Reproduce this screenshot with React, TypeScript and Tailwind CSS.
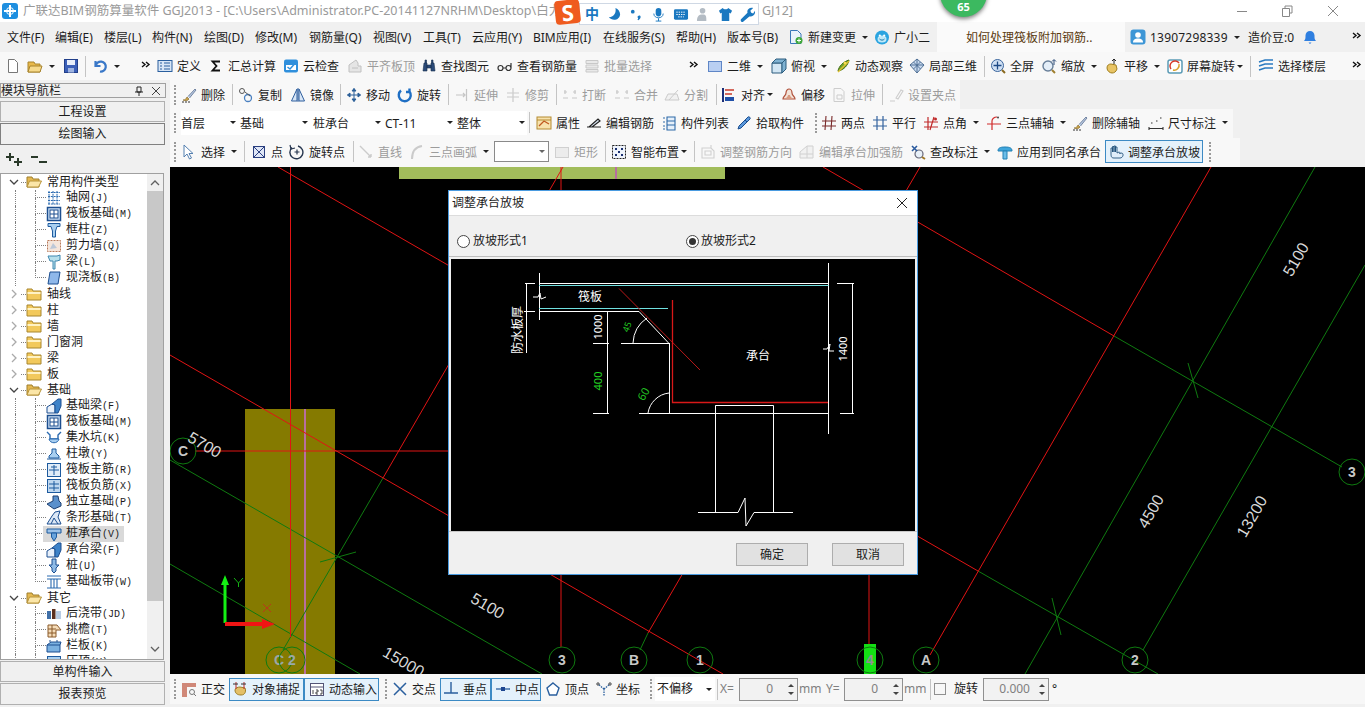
import type { ReactNode } from "react";

const ICONS: Record<string, ReactNode> = {
  chev: <path d="M5 4l3 2.5L5 9M9 4l3 2.5L9 9" stroke="#111" strokeWidth="1.4" />,
  new: <path d="M3.5 1.5h6l3 3v10h-9z" fill="#fff" stroke="#777" />,
  open: <><path d="M1 4h6l1 2h5v8H1z" fill="#e8b84a" stroke="#a8842c" /><path d="M3 8h12l-2 6H1z" fill="#f6d98a" stroke="#a8842c" /></>,
  save: <><rect x="1.5" y="1.5" width="13" height="13" fill="#3b5fb8" stroke="#223f8a" /><rect x="4" y="2" width="8" height="5" fill="#e8eefa" /><rect x="5" y="10" width="6" height="4.5" fill="#9fb4e0" /></>,
  undo: <path d="M3.5 3v5h5M3.8 8A5 5 0 1 1 8 13.500" stroke="#3a78c8" strokeWidth="2.2" />,
  define: <><rect x="1" y="2.500" width="14" height="11" fill="#d8e6f6" stroke="#2a5f9e" /><path d="M7 5h6M7 8h6M7 11h6M3 5h2M3 8h2M3 11h2" stroke="#2a5f9e" /></>,
  sigma: <path d="M12 3.500H4.500l4 4.500-4 4.500H12" stroke="#111" strokeWidth="1.8" />,
  cloud: <><rect x="1" y="1.500" width="14" height="13" rx="2" fill="#2f8fdc" /><path d="M3 7h10v5H3z" fill="#fff" /><path d="M4.500 9l2.500 2 4.500-5" stroke="#2f8fdc" strokeWidth="1.500" /></>,
  flush: <path d="M2 14V7l7-5 2 3v3h3v6zM5 10h6" fill="#ddd" stroke="#aaa" />,
  bino: <path d="M2 13l1-8h3v8zM10 13V5h3l1 8zM6 7h4v3H6zM4 5V2h1.500v3M10.500 5V2H12v3" fill="#2b4a78" stroke="#17304f" strokeWidth=".6" />,
  glasses: <path d="M1 10a2.500 2.500 0 1 0 5 0 2.500 2.500 0 0 0-5 0zM9 10a2.500 2.500 0 1 0 5 0 2.500 2.500 0 0 0-5 0M6 10h3M14 10V5" stroke="#333" strokeWidth="1.200" />,
  batch: <path d="M2 2.500h12v3H2zM2 7h12v3H2zM2 11.500h12V14H2z" fill="#e4e4e4" stroke="#b5b5b5" />,
  view2d: <rect x="1.500" y="3.500" width="13" height="10" fill="#b9cff2" stroke="#5f86c6" />,
  cube: <><path d="M1 5h10v10H1z" fill="#d2e6f4" stroke="#2c5d7e" /><path d="M1 5l4-4h10l-4 4zM11 5l4-4v10l-4 4z" fill="#7fb2d2" stroke="#2c5d7e" /></>,
  orbit: <><path d="M3 13c1-5 5-9 11-11-1 5-5 10-11 11z" fill="#6fa52e" stroke="#3c6a12" /><path d="M3 14L14 3" stroke="#e0c030" strokeWidth="1.500" /><circle cx="10" cy="5" r="1.500" fill="#f5dc50" /></>,
  local3d: <path d="M8 1l7 6-7 8-7-8zM1 7h14M8 1v14M4.500 4l7 7M11.500 4l-7 7" fill="#c7d9ee" stroke="#46688f" strokeWidth=".9" />,
  full: <><circle cx="7.500" cy="7.500" r="6" fill="#cfe0f4" stroke="#39649c" /><path d="M7.500 3.500v8M3.500 7.500h8" stroke="#1e4a86" strokeWidth="1.300" /><path d="M12 12l3 3" stroke="#8a6a20" strokeWidth="2" /></>,
  zoom: <><circle cx="7" cy="8" r="5" fill="#e4eef8" stroke="#687f99" strokeWidth="1.400" /><path d="M11 12l3 3" stroke="#a08030" strokeWidth="2" /><path d="M13 2v5M11 3.500l2-2 2 2" stroke="#2a4a78" /></>,
  pan: <><path d="M3 10c0-3 2-4 4-4l5 1 1 4c-1 3-3 4-5 4s-5-2-5-5z" fill="#e8c465" stroke="#a07f20" /><path d="M10 1v5M8 3l2-2 2 2" stroke="#222" /></>,
  screen: <><rect x="1" y="2" width="14" height="13" rx="2" fill="#fff" stroke="#5a9ab5" strokeWidth="1.500" /><path d="M4 11a5 5 0 0 1 8-6" stroke="#d83a2a" strokeWidth="1.500" /><path d="M12 6a5 5 0 0 1-6 6" stroke="#d8a02a" strokeWidth="1.500" /></>,
  floors: <path d="M1 4l6-2h8M1 8l6-2h8M1 12l6-2h8" stroke="#2a7ac0" strokeWidth="1.600" />,
  docnew: <><path d="M2.500 1.500h7l3.500 3.500v9.500H2.500z" fill="#eaf3fb" stroke="#3a78b8" /><circle cx="11" cy="11.500" r="3.500" fill="#3fa83a" /><path d="M9 11.500h4M11 9.500v4" stroke="#fff" /></>,
  xiaoer: <><circle cx="8" cy="8.500" r="7" fill="#2aa4e0" /><ellipse cx="8" cy="10" rx="4.500" ry="3.500" fill="#bfe8f8" /><circle cx="5.800" cy="6.500" r="1.100" fill="#fff" /><circle cx="10.200" cy="6.500" r="1.100" fill="#fff" /><path d="M5.500 10c1.500 1.500 3.500 1.500 5 0" stroke="#1878a8" /></>,
  user: <><rect x="0.500" y="0.500" width="15" height="15" rx="3" fill="#3d96d6" /><circle cx="8" cy="6" r="2.800" fill="#fff" /><path d="M3 13.500c0-3 2-4 5-4s5 1 5 4z" fill="#fff" /></>,
  bell: <path d="M2 12c1.500-1.500 1.500-3 1.500-5.500S5.500 2 8 2s4.500 2 4.500 4.500S12.500 10.500 14 12zM6.500 13.500h3L8 15z" fill="#2f7fe0" />,
  brush: <><path d="M2 13c2 0 3-1 4-3l2 2c-1 2-4 2-6 1z" fill="#c9a24a" stroke="#7a5f20" strokeWidth=".6" /><path d="M7 9.500L14 2l1 1-6.500 8" fill="#b9c9e0" stroke="#5a6f90" strokeWidth=".8" /><path d="M1 15h9" stroke="#333" strokeDasharray="2 1" /></>,
  copy: <><circle cx="4" cy="4" r="2.500" stroke="#555" /><circle cx="10" cy="11" r="3.500" stroke="#4a80c0" strokeWidth="1.300" /><path d="M7 5l5 4" stroke="#555" /></>,
  mirror: <path d="M7 2L1.500 14H7zM9 2l5.500 12H9zM8 1v14" stroke="#2f5f9e" fill="#d8e6f6" />,
  move: <path d="M8 1.500v13M1.500 8h13M8 1.500L6 4h4zM8 14.500L6 12h4zM1.500 8L4 6v4zM14.500 8L12 6v4z" stroke="#2b5f98" fill="#2b5f98" />,
  rotate: <path d="M12.500 4.500A6 6 0 1 1 4 3.500M12.500 1.500v3.500H9" stroke="#1f6fc4" strokeWidth="2.400" />,
  extend: <path d="M2 8h8M12.500 2v12M9 6l2 2-2 2" stroke="#b0b0b0" strokeWidth="1.200" />,
  trim: <path d="M2 6h12M2 10h12M8 1v14" stroke="#b8b8b8" strokeWidth="1.200" />,
  broke: <path d="M1 11h5M10 11h5M2 5h3M11 5h3M3 3v4M13 3v4" stroke="#b5b5b5" strokeWidth="1.200" />,
  split: <path d="M1 13h14L13 7H4zM5 13l9-10" stroke="#b8b8b8" fill="#efefef" />,
  align: <><path d="M2 1v14" stroke="#1c2f78" strokeWidth="2" /><path d="M4 3h9M4 7h7" stroke="#c83a2a" strokeWidth="1.600" /><rect x="4" y="10" width="9" height="4" fill="#2050a8" /></>,
  offset: <><path d="M2 12c0-3 3-3 3-6s2-4 3-4 3 1 3 4 3 3 3 6z" fill="#f3e3d8" stroke="#b0503a" strokeWidth="1.200" /><path d="M5 12c0-2 2-2 2-4h2c0 2 2 2 2 4z" fill="#d89a80" /></>,
  stretch: <path d="M3 1.500h7l3 3v10H3zM6 8h5v4H6z" stroke="#bbb" />,
  grips: <path d="M2 14h5M8 11l5-8 2 1-5 8z" stroke="#bbb" strokeWidth="1.100" />,
  props: <><rect x="1" y="2" width="14" height="12" fill="#f7e2ad" stroke="#b48a30" /><path d="M3 11l5-5 5 3" stroke="#c05a20" strokeWidth="1.300" /><path d="M1 5h14" stroke="#b48a30" /></>,
  editbar: <path d="M1 12h14M3 12l9-8 2 2-8 6" stroke="#222" strokeWidth="1.200" fill="#d7e3f1" />,
  list: <path d="M2 3h2M2 7h2M2 11h2M2 14h2M6 2h8v13H6zM6 6h8M6 10h8" stroke="#2f6aa8" strokeWidth="1.100" fill="#e6f0fa" />,
  eyedrop: <path d="M2 14l1-3 6-6 2 2-6 6zM9 5l3-3c1-1 3 1 2 2l-3 3" fill="#5a98dc" stroke="#1c4f90" />,
  twopts: <path d="M1 6h14M1 11h14M5 1l-1 14M11 1l-1 14" stroke="#7a2a2a" strokeWidth="1.100" />,
  parallel: <path d="M1 5h14M1 11h14M5 1v14M11 1v14" stroke="#32629e" strokeWidth="1.200" />,
  ptangle: <><path d="M1 7h14M1 12h14M5 2v13M11 2L7 15" stroke="#c02a2a" strokeWidth="1.200" /><circle cx="12.500" cy="4" r="1.500" fill="#c02a2a" /></>,
  three: <><path d="M1 9h14M6 15V6c0-2 2-4 5-4" stroke="#d02a2a" strokeWidth="1.200" /><circle cx="12" cy="2.500" r="1" fill="#444" /></>,
  dimen: <path d="M1 12v3M15 12v3M1 13.500h14M3 8h1.500M8 6h1.500M12 3h1.500" stroke="#333" strokeWidth="1.100" />,
  cursor: <path d="M3 1v12l3-3 2.500 5 2-1-2.500-4.500h4z" fill="#fff" stroke="#5580b0" />,
  point: <><rect x="2.500" y="2.500" width="11" height="11" fill="#dfe6f6" stroke="#2a3f80" /><path d="M3 3l10 10M13 3L3 13" stroke="#2a3f80" /></>,
  rotpt: <><path d="M3 3.500A6.500 6.500 0 1 0 9 2" stroke="#27364f" strokeWidth="1.400" /><path d="M1 1l1 4 4-1M8 5.500v5M5.500 8h5" stroke="#27364f" strokeWidth="1.200" /></>,
  line: <path d="M2 2l11 11M13 13h-3M13 13v-3" stroke="#b8b8b8" strokeWidth="1.400" />,
  arc: <path d="M3 15C3 8 6 3 13 2" stroke="#b8b8b8" strokeWidth="2" />,
  rect: <rect x="1.500" y="3.500" width="13" height="10" fill="#e8e8e8" stroke="#c0c0c0" />,
  smart: <><rect x="1.500" y="1.500" width="13" height="13" fill="#eef3fb" stroke="#222" strokeDasharray="2 1" /><path d="M4 4h2v2H4zM10 4h2v2h-2zM7 7h2v2H7zM4 10h2v2H4zM10 10h2v2h-2z" fill="#1a2f70" /></>,
  adjdir: <path d="M2 4h9l3 3v7H2zM5 7h6v4H5zM11 1v3" stroke="#c0c0c0" strokeWidth="1.100" />,
  edith: <path d="M1 14V8l7-6h6v12zM8 2v12M1 10h13" stroke="#c0c0c0" fill="#efefef" />,
  check: <><circle cx="9" cy="10" r="4" fill="#e8f0f8" stroke="#667" strokeWidth="1.200" /><path d="M2 2l5 5M7 2L2 7" stroke="#2a5a9e" strokeWidth="1.600" /><path d="M12 13l3 2" stroke="#a07828" strokeWidth="2" /></>,
  apply: <><path d="M1 7c0-3 2-4 7-4s7 1 7 4z" fill="#3fa6dc" stroke="#2280b4" /><path d="M6 7h4v8H6z" fill="#6dbde8" stroke="#2280b4" /></>,
  hand: <path d="M3 9V4h1.500v4V2.500H6V8V2h1.500v6V3H9v6l2-1c1 0 1 1 .5 1.500L14 9c2 1 1 5-2 5H6C3 14 3 12 3 9z" fill="#e0eefa" stroke="#23527c" strokeWidth=".9" />,
  ortho: <><path d="M1 2h14v4H6v10H1z" fill="#d08878" /><circle cx="11" cy="11" r="2.500" stroke="#777" /><path d="M13 13l2 2" stroke="#777" /></>,
  snap: <><path d="M3 9c0-2 3-3 5-3l5 1c1 2 1 7-4 7-4 0-6-2-6-5z" fill="#e4c068" stroke="#a0802a" /><path d="M4 1v7M12 1v7" stroke="#c02a2a" /><path d="M1 3h5M9 3h5" stroke="#333" /></>,
  dyn: <><rect x="1.500" y="2.500" width="13" height="12" fill="#fff" stroke="#557" /><path d="M1.500 6h13" stroke="#557" /><path d="M4 9v4M7 9h2v2H7v2h2M11 9h2v4h-2" stroke="#333" strokeWidth=".9" /></>,
  cross: <path d="M2 2l12 12M14 2L2 14" stroke="#2a5f9e" strokeWidth="1.500" />,
  perp: <path d="M1 12h14M8 1v11" stroke="#2a5f9e" strokeWidth="1.400" />,
  mid: <><path d="M1 8h14" stroke="#2a5f9e" strokeWidth="1.300" /><rect x="6" y="6" width="4" height="4" fill="#1c4590" /></>,
  vertex: <path d="M8 2l6 5-2.500 7h-7L2 7z" fill="#fff" stroke="#2a5f9e" strokeWidth="1.400" />,
  coord: <><path d="M8 8V15M8 8L2 3M8 8l6-5" stroke="#2a5f9e" strokeDasharray="1.500 1" strokeWidth="1.300" /><circle cx="2" cy="3" r="1.200" stroke="#444" /><circle cx="14" cy="3" r="1.200" stroke="#444" /></>,
  folderO: <><path d="M1 3h5l1 2h6v8H1z" fill="#e4b850" stroke="#9f7f2c" /><path d="M3.500 7H15.500l-3 6H1z" fill="#fbe6a8" stroke="#b8943a" /></>,
  folderC: <><path d="M1 3h5l1 2h8v9H1z" fill="#f2c95c" stroke="#a8862e" /><path d="M1.500 6h13v2h-13z" fill="#fff2c4" /></>,
  grid: <path d="M2 2.500h12M2 6.500h12M2 10.500h12M2 14h12M3 1v14M7 1v14M11 1v14" stroke="#2a6ab0" strokeDasharray="2 .8" />,
  raft: <><rect x="1.500" y="1.500" width="13" height="13" fill="#cfe2f6" stroke="#1d4f90" strokeWidth="1.500" /><rect x="4" y="4" width="8" height="8" fill="#fff" stroke="#1d4f90" /><path d="M4 8h8M8 4v8" stroke="#1d4f90" /></>,
  col: <path d="M2 1.500h12v3h-3L9.500 9v6h-3V9L5 4.500H2z" fill="#a8cff0" stroke="#1d5a9e" />,
  wall: <><rect x="1.500" y="2.500" width="13" height="11" fill="#f5e6dc" stroke="#b87a5a" strokeDasharray="2 1" /><path d="M4 11l3-6 4 5z" fill="#bcc8d8" /></>,
  beam: <path d="M2 2h9l3-1v5l-3 1H9v8H7V7H4z" fill="#b8e0ec" stroke="#3f88b0" />,
  slab: <path d="M4 2h10l-2 12H2z" fill="#8fb8ea" stroke="#1d4f90" />,
  fbeam: <><path d="M1 15V9l5-3 3 1v8z" fill="#e8f0fa" stroke="#1d4f90" /><path d="M6 6l6-5h3v7l-3 7H9V7z" fill="#3d82c8" stroke="#1d4f90" /></>,
  sump: <><path d="M1 2l3 3v4h8V5l3-3" stroke="#2a6ab0" strokeWidth="1.400" /><path d="M3 9c1 5 9 5 10 0z" fill="#a6cdf0" stroke="#2a6ab0" /></>,
  pier: <path d="M6 3h4v4l3 3v2H3v-2l3-3zM1 13h14" fill="#a8cff0" stroke="#1d5a9e" />,
  rmain: <><rect x="1.500" y="1.500" width="13" height="13" fill="#e0ecf8" stroke="#1d5a9e" /><path d="M3 8h10M8 3v10M5 5h6" stroke="#1d5a9e" /></>,
  rneg: <><rect x="1.500" y="1.500" width="13" height="13" fill="#c0d8f0" stroke="#1d5a9e" /><path d="M3 6h10M3 10h10M8 3v10" stroke="#1d5a9e" /></>,
  iso: <path d="M1 10l6-3V2h5l1 5 2 2v3l-7 3z" fill="#5a90cc" stroke="#1d3f70" />,
  strip: <path d="M1 14l5-8 3-4 5-1-2 6 3 7H1zM5 14l3-6 4 6" fill="#dce8f6" stroke="#1d4f90" />,
  cap: <><path d="M1 3h14v4H1z" fill="#9cc2e8" stroke="#1d5a9e" /><path d="M5.500 7h5v4L8 15l-2.500-4z" fill="#6aa4dc" stroke="#1d5a9e" /></>,
  pile: <path d="M6 1h4v6h3l-3 3v3l-2 2-2-2v-3L3 7h3z" fill="#8fbbe6" stroke="#1d4f90" />,
  band: <path d="M1 2h14M1 14h14M1 5h14M5 5v9M11 5v9M8 5v9" stroke="#2a6ab0" strokeWidth="1.100" />,
  post: <><rect x="1" y="5" width="4" height="8" fill="#3f6fa8" /><rect x="6" y="3" width="3.500" height="10" fill="#5a3020" /><rect x="10" y="5" width="5" height="8" fill="#b8cce4" /></>,
  eave: <path d="M2 3h9l4 5h-5v7H2zM2 7h8M2 11h8M6 3v12" fill="#f5dcb8" stroke="#8a5a2a" />,
  para: <path d="M1 7h13v7H1zM1 7l4-3h10l-1 3M4 2v2M11 2v2" fill="#7ab0e0" stroke="#1d4f90" />,
  cap2: <rect x="1.500" y="2.500" width="13" height="11" fill="#a8cff0" stroke="#1d5a9e" />,
};

function Ic({ n, d }: { n: string; d?: boolean }) {
  return (
    <svg viewBox="0 0 16 16" width="16" height="16" fill="none" className={d ? "shrink-0 opacity-70" : "shrink-0"}>
      {ICONS[n]}
    </svg>
  );
}

function Caret({ tight }: { tight?: boolean }) {
  return (
    <span
      className={`border-x-[3px] border-t-[3px] border-x-transparent border-t-[#222] ${tight ? "-ml-[2px]" : "ml-[2px]"}`}
    />
  );
}

function Grip({ cls = "w-[11px] pl-[4px]" }: { cls?: string }) {
  return (
    <div className={`${cls} flex h-full shrink-0 items-center`}>
      <div className="h-[20px] border-l-2 border-dotted border-[#9a9a9a]" />
    </div>
  );
}

function Sep({ w, h = "h-[21px]" }: { w: string; h?: string }) {
  return (
    <div className={`${w} flex h-full shrink-0 items-center pl-[2px]`}>
      <div className={`${h} w-px bg-[#c4c4c4]`} />
    </div>
  );
}

type Item = { w: string; ic?: string; t?: string; c?: boolean; d?: boolean; tight?: boolean; sep?: boolean };

function Items({ items }: { items: Item[] }) {
  return (
    <>
      {items.map((it, i) =>
        it.sep ? (
          <Sep key={i} w={it.w} />
        ) : (
          <div key={i} className={`${it.w} flex h-full shrink-0 items-center gap-[4px] whitespace-nowrap ${it.d ? "text-[#9c9c9c]" : ""}`}>
            {it.ic && <Ic n={it.ic} d={it.d} />}
            {it.t && <span className="pt-[2px]">{it.t}</span>}
            {it.c && <Caret tight={it.tight} />}
          </div>
        ),
      )}
    </>
  );
}

const menu = [
  ["文件(F)", "w-[48px]"],
  ["编辑(E)", "w-[49px]"],
  ["楼层(L)", "w-[48px]"],
  ["构件(N)", "w-[52px]"],
  ["绘图(D)", "w-[51px]"],
  ["修改(M)", "w-[54px]"],
  ["钢筋量(Q)", "w-[64px]"],
  ["视图(V)", "w-[50px]"],
  ["工具(T)", "w-[49px]"],
  ["云应用(Y)", "w-[61px]"],
  ["BIM应用(I)", "w-[70px]"],
  ["在线服务(S)", "w-[73px]"],
  ["帮助(H)", "w-[51px]"],
  ["版本号(B)", "w-[61px]"],
];

const row1: Item[] = [
  { w: "w-[22px]", ic: "new" },
  { w: "w-[36px]", ic: "open", c: true },
  { w: "w-[20px]", ic: "save" },
  { w: "w-[9px]", sep: true },
  { w: "w-[45px]", ic: "undo", c: true },
  { w: "w-[20px]", ic: "chev" },
  { w: "w-[51px]", ic: "define", t: "定义" },
  { w: "w-[75px]", ic: "sigma", t: "汇总计算" },
  { w: "w-[64px]", ic: "cloud", t: "云检查" },
  { w: "w-[74px]", ic: "flush", t: "平齐板顶", d: true },
  { w: "w-[76px]", ic: "bino", t: "查找图元" },
  { w: "w-[87px]", ic: "glasses", t: "查看钢筋量" },
  { w: "w-[101px]", ic: "batch", t: "批量选择", d: true },
  { w: "w-[22px]", ic: "chev" },
  { w: "w-[64px]", ic: "view2d", t: "二维", c: true },
  { w: "w-[64px]", ic: "cube", t: "俯视", c: true },
  { w: "w-[74px]", ic: "orbit", t: "动态观察" },
  { w: "w-[73px]", ic: "local3d", t: "局部三维" },
  { w: "w-[8px]", sep: true },
  { w: "w-[51px]", ic: "full", t: "全屏" },
  { w: "w-[63px]", ic: "zoom", t: "缩放", c: true },
  { w: "w-[63px]", ic: "pan", t: "平移", c: true },
  { w: "w-[81px]", ic: "screen", t: "屏幕旋转", c: true, tight: true },
  { w: "w-[10px]", sep: true },
  { w: "w-[89px]", ic: "floors", t: "选择楼层" },
];

const row2: Item[] = [
  { w: "w-[49px]", ic: "brush", t: "删除" },
  { w: "w-[8px]", sep: true },
  { w: "w-[52px]", ic: "copy", t: "复制" },
  { w: "w-[48px]", ic: "mirror", t: "镜像" },
  { w: "w-[8px]", sep: true },
  { w: "w-[51px]", ic: "move", t: "移动" },
  { w: "w-[49px]", ic: "rotate", t: "旋转" },
  { w: "w-[8px]", sep: true },
  { w: "w-[51px]", ic: "extend", t: "延伸", d: true },
  { w: "w-[49px]", ic: "trim", t: "修剪", d: true },
  { w: "w-[8px]", sep: true },
  { w: "w-[52px]", ic: "broke", t: "打断", d: true },
  { w: "w-[50px]", ic: "broke", t: "合并", d: true },
  { w: "w-[50px]", ic: "split", t: "分割", d: true },
  { w: "w-[7px]", sep: true },
  { w: "w-[60px]", ic: "align", t: "对齐", c: true, tight: true },
  { w: "w-[50px]", ic: "offset", t: "偏移" },
  { w: "w-[49px]", ic: "stretch", t: "拉伸", d: true },
  { w: "w-[8px]", sep: true },
  { w: "w-[72px]", ic: "grips", t: "设置夹点", d: true },
];

const selects = [
  ["首层", "w-[59px]", "w-[49px]"],
  ["基础", "w-[73px]", "w-[62px]"],
  ["桩承台", "w-[72px]", "w-[62px]"],
  ["CT-11", "w-[72px]", "w-[62px]"],
  ["整体", "w-[70px]", "w-[62px]"],
];

const row3a: Item[] = [
  { w: "w-[9px]", sep: true },
  { w: "w-[50px]", ic: "props", t: "属性" },
  { w: "w-[75px]", ic: "editbar", t: "编辑钢筋" },
  { w: "w-[75px]", ic: "list", t: "构件列表" },
  { w: "w-[76px]", ic: "eyedrop", t: "拾取构件" },
];

const row3b: Item[] = [
  { w: "w-[51px]", ic: "twopts", t: "两点" },
  { w: "w-[51px]", ic: "parallel", t: "平行" },
  { w: "w-[63px]", ic: "ptangle", t: "点角", c: true },
  { w: "w-[86px]", ic: "three", t: "三点辅轴", c: true },
  { w: "w-[76px]", ic: "brush", t: "删除辅轴" },
  { w: "w-[85px]", ic: "dimen", t: "尺寸标注", c: true },
];

const row4a: Item[] = [
  { w: "w-[61px]", ic: "cursor", t: "选择", c: true },
  { w: "w-[9px]", sep: true },
  { w: "w-[38px]", ic: "point", t: "点" },
  { w: "w-[62px]", ic: "rotpt", t: "旋转点" },
  { w: "w-[7px]", sep: true },
  { w: "w-[51px]", ic: "line", t: "直线", d: true },
  { w: "w-[85px]", ic: "arc", t: "三点画弧", d: true, c: true },
];

const row4b: Item[] = [
  { w: "w-[49px]", ic: "rect", t: "矩形", d: true },
  { w: "w-[8px]", sep: true },
  { w: "w-[81px]", ic: "smart", t: "智能布置", c: true, tight: true },
  { w: "w-[8px]", sep: true },
  { w: "w-[99px]", ic: "adjdir", t: "调整钢筋方向", d: true },
  { w: "w-[111px]", ic: "edith", t: "编辑承台加强筋", d: true },
  { w: "w-[87px]", ic: "check", t: "查改标注", c: true },
  { w: "w-[108px]", ic: "apply", t: "应用到同名承台" },
];

type Node = { t: string; k?: string; ic: string };

const tree: { t: string; open?: boolean; kids?: Node[] }[] = [
  {
    t: "常用构件类型",
    open: true,
    kids: [
      { t: "轴网", k: "(J)", ic: "grid" },
      { t: "筏板基础", k: "(M)", ic: "raft" },
      { t: "框柱", k: "(Z)", ic: "col" },
      { t: "剪力墙", k: "(Q)", ic: "wall" },
      { t: "梁", k: "(L)", ic: "beam" },
      { t: "现浇板", k: "(B)", ic: "slab" },
    ],
  },
  { t: "轴线" },
  { t: "柱" },
  { t: "墙" },
  { t: "门窗洞" },
  { t: "梁" },
  { t: "板" },
  {
    t: "基础",
    open: true,
    kids: [
      { t: "基础梁", k: "(F)", ic: "fbeam" },
      { t: "筏板基础", k: "(M)", ic: "raft" },
      { t: "集水坑", k: "(K)", ic: "sump" },
      { t: "柱墩", k: "(Y)", ic: "pier" },
      { t: "筏板主筋", k: "(R)", ic: "rmain" },
      { t: "筏板负筋", k: "(X)", ic: "rneg" },
      { t: "独立基础", k: "(P)", ic: "iso" },
      { t: "条形基础", k: "(T)", ic: "strip" },
      { t: "桩承台", k: "(V)", ic: "cap" },
      { t: "承台梁", k: "(F)", ic: "fbeam" },
      { t: "桩", k: "(U)", ic: "pile" },
      { t: "基础板带", k: "(W)", ic: "band" },
    ],
  },
  {
    t: "其它",
    open: true,
    kids: [
      { t: "后浇带", k: "(JD)", ic: "post" },
      { t: "挑檐", k: "(T)", ic: "eave" },
      { t: "栏板", k: "(K)", ic: "para" },
      { t: "压顶", k: "(Y)", ic: "cap2" },
    ],
  },
];

function Leaf({ n, last, sel }: { n: Node; last: boolean; sel: boolean }) {
  return (
    <div className="flex h-[16px] items-stretch pl-[14px]">
      <div className="w-[20px] border-l border-dotted border-[#808080]" />
      <div className="w-[11px]">
        <div className="h-[8px] border-b border-l border-dotted border-[#808080]" />
        {!last && <div className="h-[8px] border-l border-dotted border-[#808080]" />}
      </div>
      <div className={`-ml-[3px] flex w-[81px] items-center gap-[4px] whitespace-nowrap pl-[3px] ${sel ? "bg-[#d9d9d9]" : ""}`}>
        <Ic n={n.ic} />
        <span>
          {n.t}
          <span className="font-['Liberation_Mono',monospace] text-[10px]">{n.k}</span>
        </span>
      </div>
    </div>
  );
}

function Tree() {
  return (
    <div className="h-[485px] min-w-0 flex-1 overflow-hidden">
      {tree.map((g) => (
        <div key={g.t + (g.kids ? "1" : "")}>
          <div className="flex h-[16px] items-center pl-[8px]">
            <svg viewBox="0 0 10 10" width="10" height="10" fill="none">
              {g.open ? <path d="M1 3l4 4 4-4" stroke="#444" strokeWidth="1.300" /> : <path d="M3 1l4 4-4 4" stroke="#aaa" strokeWidth="1.300" />}
            </svg>
            <div className="ml-[2px] w-[5px] border-b border-dotted border-[#808080]" />
            <Ic n={g.open ? "folderO" : "folderC"} />
            <span className="ml-[5px] whitespace-nowrap">{g.t}</span>
          </div>
          {g.kids?.map((n, i) => (
            <Leaf key={n.t + i} n={n} last={i === g.kids!.length - 1} sel={n.t === "桩承台"} />
          ))}
        </div>
      ))}
    </div>
  );
}

function NavButton({ t, dark, cls }: { t: string; dark?: boolean; cls: string }) {
  return (
    <div className={`${cls} flex w-[165px] items-center justify-center border ${dark ? "border-[#808080]" : "border-[#b0b0b0]"} bg-[#f0f0f0]`}>
      {t}
    </div>
  );
}

function LeftPanel() {
  return (
    <div className="flex h-[627px] w-[170px] shrink-0 flex-col pt-[3px]">
      <div className="flex h-[15px] w-[166px] items-center border border-[#a0a0a0]">
        <span className="flex-1">模块导航栏</span>
        <svg viewBox="0 0 10 10" width="10" height="10" fill="none" className="mr-[7px]">
          <path d="M3 1h4v5H3zM1 6h8M5 6v4" stroke="#222" />
        </svg>
        <svg viewBox="0 0 10 10" width="10" height="10" fill="none" className="mr-[4px]">
          <path d="M1 1l8 8M9 1L1 9" stroke="#444" />
        </svg>
      </div>
      <NavButton t="工程设置" cls="mt-[3px] h-[21px]" />
      <NavButton t="绘图输入" dark cls="mt-px h-[22px]" />
      <div className="flex h-[28px] w-[165px] items-center gap-[7px] pl-[5px]">
        <svg viewBox="0 0 18 16" width="18" height="16" fill="none">
          <path d="M1 6h8M5 2v8M9 11h8M13 7v8" stroke="#2a3a2a" strokeWidth="2" />
        </svg>
        <svg viewBox="0 0 18 16" width="18" height="16" fill="none">
          <path d="M1 6h7M9 11h8" stroke="#2a3a2a" strokeWidth="2" />
        </svg>
      </div>
      <div className="flex h-[487px] w-[164px] border border-[#a0a0a0] bg-white">
        <Tree />
        <div className="flex h-[485px] w-[16px] shrink-0 flex-col bg-[#f0f0f0]">
          <div className="flex h-[17px] items-center justify-center">
            <svg viewBox="0 0 10 10" width="10" height="10" fill="none">
              <path d="M1 7l4-4 4 4" stroke="#606060" strokeWidth="1.300" />
            </svg>
          </div>
          <div className="h-[410px] bg-[#c8c8c8]" />
          <div className="flex h-[58px] items-end justify-center pb-[5px]">
            <svg viewBox="0 0 10 10" width="10" height="10" fill="none">
              <path d="M1 3l4 4 4-4" stroke="#606060" strokeWidth="1.300" />
            </svg>
          </div>
        </div>
      </div>
      <NavButton t="单构件输入" cls="mt-[1px] h-[21px]" />
      <NavButton t="报表预览" cls="mt-px h-[22px]" />
    </div>
  );
}

function Circle({ x, y, t, fill = "#c8c8c8" }: { x: number; y: number; t: string; fill?: string }) {
  return (
    <>
      <circle cx={x} cy={y} r="13" stroke="#0f7a10" />
      <text x={x} y={y + 5} textAnchor="middle" fill={fill} fontSize="14" fontWeight="700" fontFamily="Liberation Sans Narrow, Liberation Sans, sans-serif">
        {t}
      </text>
    </>
  );
}

const redLines = [
  [290.5, 167, 290.5, 637],
  [278, 167, 978, 571],
  [823, 167, 1114, 336],
  [170, 355, 723, 674],
  [195, 451, 448, 451],
  [563, 167, 383, 478],
  [920, 167, 648, 633],
  [1211, 167, 930, 655],
  [561, 167, 561, 647],
  [869, 500, 869, 644],
];

const greenLines = [
  [978, 571, 1158, 674],
  [1114, 336, 1342, 467],
  [170, 460, 542, 674],
  [170, 564, 360, 674],
  [383, 478, 283, 650],
  [648, 633, 640, 650],
  [1315, 167, 1025, 674],
  [1365, 265, 1143, 650],
  [320, 562, 356, 552],
  [1188, 363, 1198, 398],
  [1052, 598, 1061, 635],
];

const dims: [string, number, number, number][] = [
  ["5700", 204, 446, 30],
  ["5100", 487, 607, 30],
  ["15000", 403, 663, 30],
  ["5100", 1297, 260, -60],
  ["4500", 1152, 512, -60],
  ["13200", 1253, 517, -60],
];

function CanvasDrawing() {
  return (
    <svg viewBox="170 167 1195 507" width="1195" height="507" fill="none" className="block">
      <rect x="399" y="167" width="326" height="12" fill="#a2bd5b" />
      <rect x="615" y="167" width="2" height="12" fill="#b86fa0" />
      <rect x="245" y="409" width="90" height="265" fill="#857a00" />
      <rect x="304" y="409" width="2" height="265" fill="#b86fa0" />
      {greenLines.map((l, i) => (
        <line key={i} x1={l[0]} y1={l[1]} x2={l[2]} y2={l[3]} stroke="#0f7a10" />
      ))}
      {redLines.map((l, i) => (
        <line key={i} x1={l[0]} y1={l[1]} x2={l[2]} y2={l[3]} stroke="#e01414" />
      ))}
      <rect x="864" y="644" width="12" height="30" fill="#14e014" />
      <Circle x={183} y={451} t="C" />
      <Circle x={279} y={660} t="C" fill="#9aa8a8" />
      <Circle x={292} y={660} t="2" fill="#9aa8a8" />
      <Circle x={562} y={660} t="3" />
      <Circle x={634} y={660} t="B" />
      <Circle x={700} y={660} t="1" />
      <Circle x={870} y={660} t="4" fill="#909090" />
      <Circle x={926} y={660} t="A" />
      <Circle x={1135} y={660} t="2" />
      <Circle x={1352} y={472} t="3" />
      {dims.map(([t, x, y, r], i) => (
        <text key={i} x={x} y={y} textAnchor="middle" dominantBaseline="middle" transform={`rotate(${r} ${x} ${y})`} fill="#d8d8d8" fontSize="16" fontFamily="Liberation Sans, sans-serif">
          {t}
        </text>
      ))}
      <path d="M225 623V583" stroke="#14f014" strokeWidth="3" />
      <path d="M221 585l4-10 4 10z" fill="#14f014" />
      <path d="M225 624h38" stroke="#f01414" strokeWidth="4" />
      <path d="M262 619l13 5-13 5z" fill="#f01414" />
      <path d="M234 578l4.500 5 4.500-5M238.500 583v4" stroke="#14b014" />
      <path d="M263 604l8 8M271 604l-8 8" stroke="#b83a1a" />
    </svg>
  );
}

function DialogDrawing() {
  const white = "M539.500 273V320M525 283.500H535M526.500 283.500V353M524 311.500H535M533 297H538L540 293L541 299L546 297M539 283.500H828.500M539 311.500H639M639 311.500L669.500 344M621 343.500H669.500M669.500 343V413.500M639 413.500H828.500M828.500 263V434M823 349H827L830 344L829 351H834M593 343.500H609M593 413.500H609M607.500 311.500V413.500M715.500 413V405.500H773.500V512.500M715.500 405.500V512.500M698 512.500H738L745 498L746 526L754 512.500H793M837 283.500H854M840 413.500H854M852.500 283.500V413.500";
  return (
    <svg viewBox="451 259 464 272" width="464" height="272" fill="none" className="block">
      <path d={white} stroke="#fff" />
      <path d="M633 343A32 32 0 0 1 647 318M648 413A24 24 0 0 1 669 393" stroke="#fff" />
      <path d="M539 285.500H828.500M539 308.500H668" stroke="#6fe0e0" />
      <path d="M619 288.500L700 370" stroke="#b81818" />
      <path d="M672.500 300V402.500H828" stroke="#d81818" strokeWidth="1.300" />
      <text x="590" y="301" textAnchor="middle" fill="#fff" fontSize="12">筏板</text>
      <text x="758" y="360" textAnchor="middle" fill="#fff" fontSize="12">承台</text>
      <text transform="rotate(-90 522 330)" x="522" y="330" textAnchor="middle" fill="#fff" fontSize="12">防水板厚</text>
      <text transform="rotate(-90 602 327)" x="602" y="327" textAnchor="middle" fill="#fff" fontSize="11">1000</text>
      <text transform="rotate(-90 602 381)" x="602" y="381" textAnchor="middle" fill="#22d022" fontSize="11">400</text>
      <text transform="rotate(-90 847 349)" x="847" y="349" textAnchor="middle" fill="#fff" fontSize="11">1400</text>
      <text transform="rotate(-70 630 328)" x="630" y="328" textAnchor="middle" fill="#22c022" fontSize="9">45</text>
      <text transform="rotate(-60 647 396)" x="647" y="396" textAnchor="middle" fill="#22c022" fontSize="11">60</text>
    </svg>
  );
}

function Radio({ on }: { on?: boolean }) {
  return (
    <span className="flex h-[13px] w-[13px] items-center justify-center rounded-full border border-[#444] bg-white">
      {on && <span className="h-[7px] w-[7px] rounded-full bg-[#333]" />}
    </span>
  );
}

function Dialog() {
  return (
    <div className="absolute left-[278px] top-[23px] flex h-[385px] w-[470px] flex-col border border-[#4a9be0] bg-[#f0f0f0]">
      <div className="flex h-[25px] items-center justify-between border-b border-[#dcdcdc] bg-white pl-[3px] pr-[9px]">
        <span>调整承台放坡</span>
        <svg viewBox="0 0 12 12" width="12" height="12" fill="none">
          <path d="M1 1l10 10M11 1L1 11" stroke="#222" />
        </svg>
      </div>
      <div className="flex h-[41px] items-center border-b border-[#bdbdbd] pl-[8px] pt-[10px]">
        <label className="flex w-[229px] items-center gap-[3px]">
          <Radio />
          <span>放坡形式1</span>
        </label>
        <label className="flex items-center gap-[2px]">
          <Radio on />
          <span>放坡形式2</span>
        </label>
      </div>
      <div className="ml-[2px] mt-[2px] h-[272px] w-[464px] bg-black">
        <DialogDrawing />
      </div>
      <div className="flex flex-1 items-center justify-end gap-[24px] border-t border-[#c8c8c8] pr-[13px] pt-[3px]">
        <div className="flex h-[23px] w-[72px] items-center justify-center border border-[#adadad] bg-[#e1e1e1]">确定</div>
        <div className="flex h-[23px] w-[72px] items-center justify-center border border-[#adadad] bg-[#e1e1e1]">取消</div>
      </div>
    </div>
  );
}

function Spin({ v, w, pr }: { v: string; w: string; pr: string }) {
  return (
    <div className={`${w} flex h-[23px] shrink-0 items-center justify-end border border-[#909090] bg-[#f2f2f2] text-[#808080]`}>
      <span className={pr}>{v}</span>
      <div className="flex flex-col gap-[5px] pr-[3px]">
        <span className="border-x-[3px] border-b-[3px] border-x-transparent border-b-[#444]" />
        <span className="border-x-[3px] border-t-[3px] border-x-transparent border-t-[#444]" />
      </div>
    </div>
  );
}

function ActiveTool({ w, ic, t, pl = "pl-[2px]" }: { w: string; ic: string; t: string; pl?: string }) {
  return (
    <div className={`${w} ${pl} flex h-[23px] shrink-0 items-center gap-[4px] border border-[#3c8ac4] bg-[#e4f1fb] whitespace-nowrap`}>
      <Ic n={ic} />
      <span className="pt-[2px]">{t}</span>
    </div>
  );
}

function StatusBar() {
  return (
    <div className="flex h-[33px] items-start bg-[#f0f0f0]">
      <div className="flex h-[30px] w-full items-center bg-[#f7f7f7]">
        <Grip />
        <Items items={[{ w: "w-[48px]", ic: "ortho", t: "正交" }]} />
        <ActiveTool w="w-[75px]" ic="snap" t="对象捕捉" />
        <ActiveTool w="w-[75px]" ic="dyn" t="动态输入" pl="pl-[4px]" />
        <Grip cls="w-[13px] pl-[6px]" />
        <Items items={[{ w: "w-[48px]", ic: "cross", t: "交点" }]} />
        <ActiveTool w="w-[51px]" ic="perp" t="垂点" />
        <ActiveTool w="w-[50px]" ic="mid" t="中点" pl="pl-[3px]" />
        <div className="w-[4px] shrink-0" />
        <Items
          items={[
            { w: "w-[51px]", ic: "vertex", t: "顶点" },
            { w: "w-[52px]", ic: "coord", t: "坐标" },
          ]}
        />
        <Grip cls="w-[7px] pl-[2px]" />
        <div className="flex h-[24px] w-[60px] shrink-0 items-center bg-white pl-[2px]">
          <span className="w-[47px]">不偏移</span>
          <Caret />
        </div>
        <Sep w="w-[5px]" />
        <span className="w-[19px] shrink-0 text-[#808080]">X=</span>
        <Spin v="0" w="w-[59px]" pr="pr-[15px]" />
        <span className="ml-[1px] w-[27px] shrink-0 text-[#808080]">mm</span>
        <span className="w-[18px] shrink-0 text-[#808080]">Y=</span>
        <Spin v="0" w="w-[59px]" pr="pr-[15px]" />
        <span className="ml-[1px] w-[24px] shrink-0 text-[#808080]">mm</span>
        <Sep w="w-[6px]" />
        <span className="h-[12px] w-[12px] shrink-0 border border-[#909090] bg-[#f7f7f7]" />
        <span className="ml-[8px] w-[29px] shrink-0">旋转</span>
        <Spin v="0.000" w="w-[66px]" pr="pr-[9px]" />
        <span className="ml-[3px]">°</span>
      </div>
    </div>
  );
}

function TitleBar() {
  return (
    <div className="flex h-[22px] items-center bg-white pl-[2px] text-[#9a9a9a]">
      <svg viewBox="0 0 16 16" width="16" height="16" fill="none" className="mr-[5px] shrink-0">
        <rect width="16" height="16" rx="3" fill="#1e8fe0" />
        <path d="M8 2v12M2 8h12" stroke="#fff" strokeWidth="2" />
        <circle cx="8" cy="8" r="3.500" stroke="#fff" />
      </svg>
      <span className="w-[739px] shrink-0 overflow-hidden whitespace-nowrap text-[12.5px]">
        广联达BIM钢筋算量软件 GGJ2013 - [C:\Users\Administrator.PC-20141127NRHM\Desktop\白力达.GGJ12]
      </span>
      <span className="text-[12.5px]">GJ12]</span>
      <svg viewBox="0 0 110 12" width="110" height="12" fill="none" className="ml-auto mr-[18px] shrink-0">
        <path d="M0 6.500h10" stroke="#888" />
        <path d="M45.500 3.500h7v8h-7zM48 3.500v-2.500h7v7h-2" stroke="#888" />
        <path d="M91 1l10 10M101 1L91 11" stroke="#888" />
      </svg>
    </div>
  );
}

function ImeBar() {
  return (
    <div className="absolute left-[555px] top-0 flex h-[26px] items-start">
      <div className="z-10 flex h-[24px] w-[25px] -rotate-6 items-center justify-center rounded-[4px] bg-[#ef5b1e] text-[22px] font-bold leading-none text-white">S</div>
      <div className="-ml-px mt-[3px] flex h-[22px] w-[180px] items-center gap-[7px] border border-[#cfd8e4] bg-white pl-[5px] text-[#1a78c0]">
        <span className="w-[15px] text-[14px] font-bold leading-none">中</span>
        <svg viewBox="0 0 16 16" width="15" height="15"><path d="M9 1c1 5-1 9-7 10 3 4 11 4 12-3 0-3-2-6-5-7z" fill="#1a78c0" /></svg>
        <svg viewBox="0 0 16 16" width="15" height="15" fill="#1a78c0"><circle cx="4" cy="5" r="2" /><path d="M11 9c2 0 2 3-1 5l-1-.5c1-1 1-2 0-2.500 0-1 1-2 2-2z" /></svg>
        <svg viewBox="0 0 16 16" width="15" height="15" fill="none"><rect x="5" y="1" width="6" height="9" rx="3" fill="#1a78c0" /><path d="M3 7c0 6 10 6 10 0M8 12v3M5 15h6" stroke="#1a78c0" /></svg>
        <svg viewBox="0 0 16 16" width="16" height="15" fill="none"><rect x="0.500" y="2.500" width="15" height="11" rx="1.500" fill="#1a78c0" /><path d="M3 5.500h10M3 8h10M5 10.500h6" stroke="#fff" strokeDasharray="1.500 1" /></svg>
        <svg viewBox="0 0 16 16" width="15" height="15" fill="#b4bcc4"><circle cx="7" cy="4" r="3" /><path d="M1 15c0-5 2-7 6-7s4 2 4 7z" /></svg>
        <svg viewBox="0 0 16 16" width="15" height="15" fill="#1a78c0"><path d="M5 1L1 4l1.500 3L4 6v9h8V6l1.500 1L15 4l-4-3c-1 2-5 2-6 0z" /></svg>
        <svg viewBox="0 0 16 16" width="15" height="15" fill="#1a78c0"><path d="M1 13l7-7c-1-3 2-6 6-5l-3 3 1 2 2 1 2-3c1 4-3 7-6 6l-7 6c-1 .5-3-1-2-3z" /></svg>
      </div>
    </div>
  );
}

export default function App() {
  return (
    <div className="relative h-[707px] w-[1365px] overflow-hidden bg-[#f0f0f0] font-['Noto_Sans','Noto_Sans_CJK_SC',sans-serif] text-[12px] leading-[16px] text-[#1c1c1c]">
      <TitleBar />

      <div className="flex h-[30px] items-center pl-[7px]">
        {menu.map(([t, w]) => (
          <span key={t} className={`${w} shrink-0 whitespace-nowrap pt-[2px]`}>{t}</span>
        ))}
        <Items
          items={[
            { w: "w-[86px]", ic: "docnew", t: "新建变更", c: true },
            { w: "w-[63px]", ic: "xiaoer", t: "广小二" },
          ]}
        />
        <div className="flex h-full w-[188px] shrink-0 items-center bg-[#fafafa] pl-[29px] pt-[2px] text-[#5a3a10]">如何处理筏板附加钢筋..</div>
        <div className="w-[5px] shrink-0" />
        <div className="flex h-full w-[118px] shrink-0 items-center gap-[4px] whitespace-nowrap">
          <Ic n="user" />
          <span className="pt-[2px] tracking-[0.2px]">13907298339</span>
          <Caret />
        </div>
        <span className="w-[54px] shrink-0 pt-[2px]">造价豆:0</span>
        <Ic n="bell" />
        <div className="ml-auto mr-px">
          <Ic n="chev" />
        </div>
      </div>

      <div className="flex h-[28px] items-center bg-[#f8f8f8] pl-[5px]">
        <Items items={row1} />
        <div className="ml-auto mr-px">
          <Ic n="chev" />
        </div>
      </div>

      <div className="flex">
        <LeftPanel />
        <div className="flex w-[1195px] flex-col">
          <div className="flex h-[29px] w-[790px] items-center bg-[#f8f8f8]">
            <Grip />
            <Items items={row2} />
          </div>
          <div className="flex h-[29px] w-[1063px] items-center bg-[#f8f8f8] pb-[2px]">
            <Grip />
            {selects.map(([t, w, tw]) => (
              <div key={t} className={`${w} flex h-[24px] shrink-0 items-center bg-white`}>
                <span className={`${tw} pt-[2px]`}>{t}</span>
                <span className="border-x-[3px] border-t-[3px] border-x-transparent border-t-[#222]" />
              </div>
            ))}
            <Items items={row3a} />
            <Grip cls="w-[9px] pl-[3px]" />
            <Items items={row3b} />
          </div>
          <div className="flex h-[29px] w-[1070px] items-center bg-[#f8f8f8] pb-[2px]">
            <Grip />
            <Items items={row4a} />
            <div className="w-[60px] shrink-0">
              <div className="flex h-[21px] w-[55px] items-center justify-end border border-[#8a8a8a] bg-white pr-[3px]">
                <span className="border-x-[3px] border-t-[3px] border-x-transparent border-t-[#666]" />
              </div>
            </div>
            <Items items={row4b} />
            <ActiveTool w="w-[98px]" ic="hand" t="调整承台放坡" />
            <Grip cls="w-[11px] pl-[6px]" />
          </div>
          <div className="relative h-[507px] bg-black">
            <CanvasDrawing />
            <Dialog />
          </div>
          <StatusBar />
        </div>
      </div>

      <ImeBar />
      <div className="absolute -top-[30px] left-[940px] flex h-[47px] w-[47px] items-end justify-center rounded-full bg-[#3cb960] pb-[5px] text-[11px] font-bold leading-none text-white shadow-[0_2px_4px_rgba(0,0,0,0.5)]">
        65
      </div>
    </div>
  );
}
